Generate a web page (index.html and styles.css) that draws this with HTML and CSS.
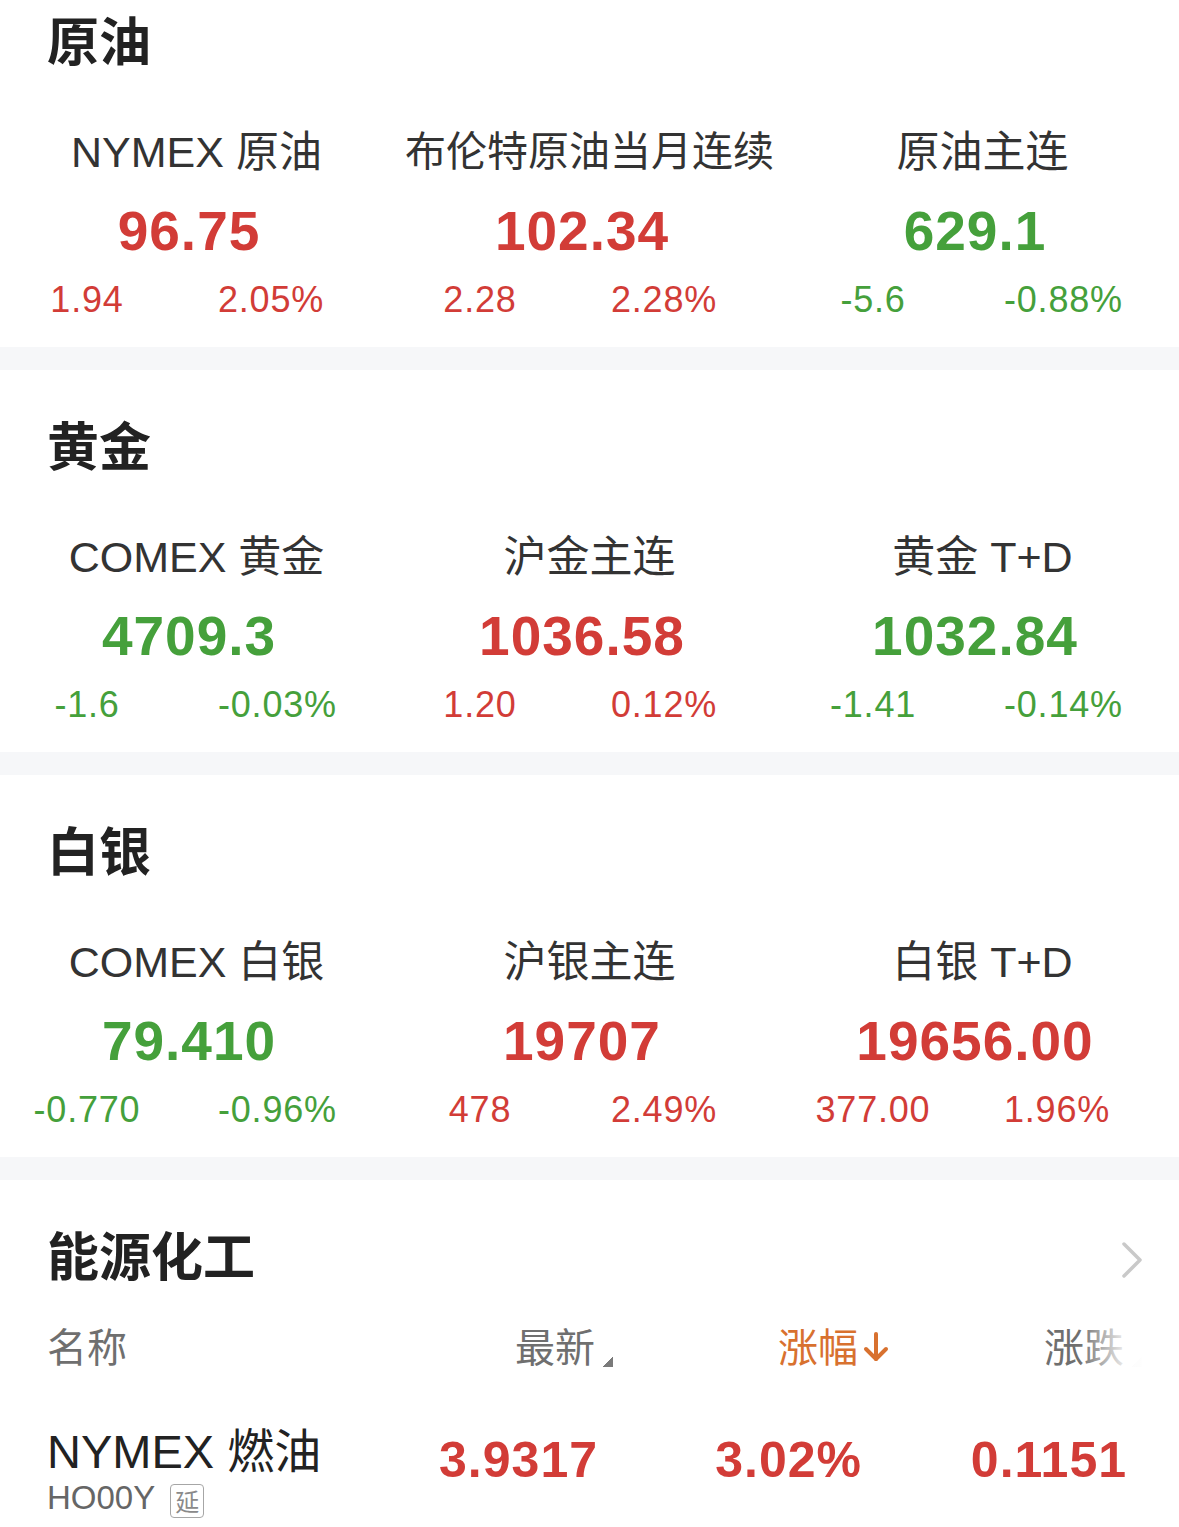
FILE: index.html
```html
<!DOCTYPE html>
<html lang="zh-CN">
<head>
<meta charset="utf-8">
<title>行情</title>
<link rel="stylesheet" href="styles.css">
</head>
<body>
<main class="page">
  <section class="block block--first">
    <h2 class="block-title">原油</h2>
    <div class="quotes">
      <div class="quote">
        <div class="q-name">NYMEX 原油</div>
        <div class="q-price up">96.75</div>
        <div class="q-change up"><span class="q-abs">1.94</span><span class="q-pct">2.05%</span></div>
      </div>
      <div class="quote">
        <div class="q-name q-name--long">布伦特原油当月连续</div>
        <div class="q-price up">102.34</div>
        <div class="q-change up"><span class="q-abs">2.28</span><span class="q-pct">2.28%</span></div>
      </div>
      <div class="quote">
        <div class="q-name">原油主连</div>
        <div class="q-price down">629.1</div>
        <div class="q-change down"><span class="q-abs">-5.6</span><span class="q-pct">-0.88%</span></div>
      </div>
    </div>
  </section>
  <div class="band"></div>

  <section class="block">
    <h2 class="block-title">黄金</h2>
    <div class="quotes">
      <div class="quote">
        <div class="q-name">COMEX 黄金</div>
        <div class="q-price down">4709.3</div>
        <div class="q-change down"><span class="q-abs">-1.6</span><span class="q-pct">-0.03%</span></div>
      </div>
      <div class="quote">
        <div class="q-name">沪金主连</div>
        <div class="q-price up">1036.58</div>
        <div class="q-change up"><span class="q-abs">1.20</span><span class="q-pct">0.12%</span></div>
      </div>
      <div class="quote">
        <div class="q-name">黄金 T+D</div>
        <div class="q-price down">1032.84</div>
        <div class="q-change down"><span class="q-abs">-1.41</span><span class="q-pct">-0.14%</span></div>
      </div>
    </div>
  </section>
  <div class="band"></div>

  <section class="block">
    <h2 class="block-title">白银</h2>
    <div class="quotes">
      <div class="quote">
        <div class="q-name">COMEX 白银</div>
        <div class="q-price down">79.410</div>
        <div class="q-change down"><span class="q-abs">-0.770</span><span class="q-pct">-0.96%</span></div>
      </div>
      <div class="quote">
        <div class="q-name">沪银主连</div>
        <div class="q-price up">19707</div>
        <div class="q-change up"><span class="q-abs">478</span><span class="q-pct">2.49%</span></div>
      </div>
      <div class="quote">
        <div class="q-name">白银 T+D</div>
        <div class="q-price up">19656.00</div>
        <div class="q-change up"><span class="q-abs">377.00</span><span class="q-pct">1.96%</span></div>
      </div>
    </div>
  </section>
  <div class="band"></div>

  <section class="block block--table">
    <div class="title-row">
      <h2 class="block-title">能源化工</h2>
      <svg class="chevron" width="22" height="36" viewBox="0 0 22 36" aria-hidden="true">
        <polyline points="3,2 19,18 3,34" fill="none" stroke="#c9c9c9" stroke-width="3.5" stroke-linecap="round" stroke-linejoin="round"/>
      </svg>
    </div>
    <div class="t-head">
      <div class="th th-name">名称</div>
      <div class="th th-num">最新<span class="sort-tri"></span></div>
      <div class="th th-num th-active">涨幅<svg class="sort-arrow" width="28" height="32" viewBox="0 0 28 32" aria-hidden="true"><line x1="14" y1="3" x2="14" y2="28" stroke="#d8712f" stroke-width="4" stroke-linecap="round"/><polyline points="4,18 14,28 24,18" fill="none" stroke="#d8712f" stroke-width="4" stroke-linecap="round" stroke-linejoin="round"/></svg></div>
      <div class="th th-num th-last">涨跌<span class="sort-tri sort-tri--light"></span></div>
    </div>
    <div class="t-row">
      <div class="td-name">
        <div class="row-name">NYMEX 燃油</div>
        <div class="row-code">HO00Y<span class="badge">延</span></div>
      </div>
      <div class="td-num td-latest up">3.9317</div>
      <div class="td-num td-pct up">3.02%</div>
      <div class="td-num td-chg up">0.1151</div>
    </div>
  </section>
</main>
</body>
</html>
```

FILE: styles.css
```css
* { box-sizing: border-box; }

html, body {
  margin: 0;
  padding: 0;
  background: #ffffff;
}

body {
  font-family: "Liberation Sans", "Noto Sans CJK SC", sans-serif;
  color: #333333;
}

.page {
  width: 1179px;
  overflow: hidden;
}

.block {
  padding: 39px 0 25px 0;
}

.block--first {
  padding-top: 4px;
}

.block-title {
  margin: 0;
  padding-left: 47px;
  font-family: "Noto Sans CJK SC", sans-serif;
  font-size: 52px;
  line-height: 70px;
  font-weight: 700;
  color: #222222;
}

.quotes {
  display: grid;
  grid-template-columns: repeat(3, 1fr);
  margin-top: 53px;
}

.quote {
  display: flex;
  flex-direction: column;
}

.q-name {
  text-align: center;
  font-size: 43px;
  line-height: 50px;
  color: #333333;
  white-space: nowrap;
}

.q-name--long {
  font-size: 41px;
}

.q-price {
  margin-top: 24px;
  padding-right: 15px;
  text-align: center;
  font-family: "Liberation Sans", sans-serif;
  font-weight: 700;
  font-size: 55px;
  letter-spacing: 1px;
  line-height: 60px;
}

.q-change {
  display: grid;
  grid-template-columns: 174px auto;
  column-gap: 44px;
  margin-top: 17px;
  font-family: "Liberation Sans", sans-serif;
  font-size: 36px;
  letter-spacing: 0.8px;
  line-height: 44px;
}

.q-abs { text-align: center; }
.q-pct { text-align: left; }

.up { color: #d23c37; }
.down { color: #45a03b; }

.band {
  height: 23px;
  background: #f6f7f9;
}

/* table section */
.block--table {
  padding-bottom: 0;
}

.title-row {
  display: flex;
  align-items: center;
  justify-content: space-between;
  padding-right: 36px;
}

.chevron {
  display: block;
  margin-top: 12px;
}

.t-head,
.t-row {
  display: grid;
  grid-template-columns: 373px 195px 277px 253px;
  padding-left: 47px;
}

.t-head {
  position: relative;
  margin-top: 31px;
  font-family: "Noto Sans CJK SC", sans-serif;
  font-size: 40px;
  line-height: 50px;
  color: #6f6f6f;
}

.t-head::after {
  content: "";
  position: absolute;
  top: 0;
  right: 0;
  width: 100px;
  height: 100%;
  background: linear-gradient(to right, rgba(255,255,255,0) 0%, rgba(255,255,255,0.85) 45%, #ffffff 70%);
}

.th {
  display: flex;
  align-items: flex-end;
  white-space: nowrap;
}

.th-num {
  justify-content: flex-end;
}

.th-active {
  color: #d8712f;
  padding-right: 2px;
  align-items: center;
}

.sort-arrow {
  display: block;
  margin-left: 4px;
  margin-top: 4px;
}

.sort-tri {
  display: block;
  width: 10px;
  height: 10px;
  margin-left: 8px;
  margin-right: 2px;
  margin-bottom: 3px;
  background: linear-gradient(to bottom right, transparent 50%, #7a7a7a 50%);
}

.sort-tri--light {
  background: linear-gradient(to bottom right, transparent 50%, #e4e4e4 50%);
  margin-right: 3px;
}

.t-row {
  margin-top: 57px;
}

.td-name {
  display: flex;
  flex-direction: column;
}

.row-name {
  font-size: 47px;
  line-height: 50px;
  color: #222222;
  white-space: nowrap;
}

.row-code {
  display: flex;
  align-items: center;
  height: 42px;
  font-family: "Liberation Sans", sans-serif;
  font-size: 33px;
  color: #666666;
}

.badge {
  display: inline-flex;
  align-items: center;
  justify-content: center;
  width: 34px;
  height: 34px;
  margin-left: 15px;
  margin-top: 6px;
  border: 1.5px solid #a6a6a6;
  border-radius: 4px;
  font-family: "Noto Sans CJK SC", sans-serif;
  font-size: 24px;
  line-height: 1;
  color: #8a8a8a;
}

.td-num {
  padding-top: 3px;
  text-align: right;
  font-family: "Liberation Sans", sans-serif;
  font-weight: 700;
  font-size: 50px;
  letter-spacing: 1px;
  line-height: 60px;
}

.td-latest { padding-right: 17px; }
.td-pct { padding-right: 30px; }
.td-chg { padding-right: 18px; }
```
